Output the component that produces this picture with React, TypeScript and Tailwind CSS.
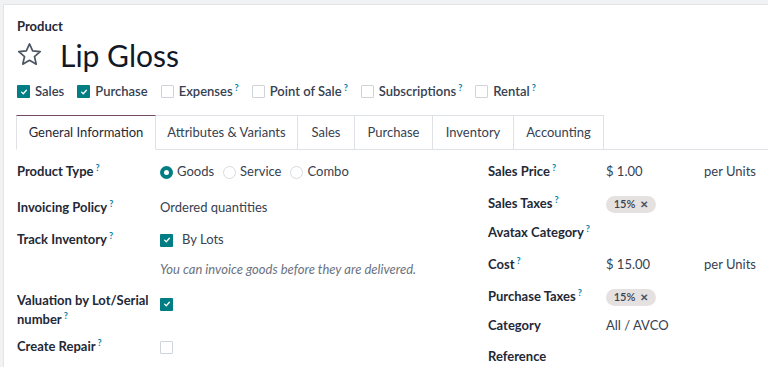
import React from "react";

const teal = "bg-[#017e84]";

function Help() {
  return <span className="inline-block align-top ml-[2px] text-[9px] leading-[12px] font-bold text-[#0180a5]">?</span>;
}

function Check({ on }: { on?: boolean }) {
  if (on) {
    return (
      <span className={`inline-flex items-center justify-center w-[13px] h-[13px] rounded-[1px] ${teal} shrink-0`}>
        <svg viewBox="0 0 10 10" className="w-[8px] h-[8px]">
          <path d="M2 5.2 L4.1 7.2 L8 2.8" fill="none" stroke="white" strokeWidth="1.6" strokeLinecap="round" strokeLinejoin="round" />
        </svg>
      </span>
    );
  }
  return <span className="inline-block w-[13px] h-[13px] rounded-[1px] border border-[#cfd4da] bg-white shrink-0" />;
}

function Radio({ on }: { on?: boolean }) {
  return on ? (
    <span className="inline-block w-[13px] h-[13px] rounded-full border-[4px] border-[#017e84] bg-white shrink-0" />
  ) : (
    <span className="inline-block w-[13px] h-[13px] rounded-full border border-[#d6dadf] bg-white shrink-0" />
  );
}

function Tag() {
  return (
    <span className="inline-flex items-center gap-[5px] h-[17px] w-[50px] justify-center rounded-full bg-[#e6e1e1] text-[11px] font-semibold text-[#374151]">
      15% <span className="text-[10px] leading-none text-[#4b5563]">✕</span>
    </span>
  );
}

const tabs = [
  { name: "General Information", w: 140, active: true },
  { name: "Attributes & Variants", w: 142 },
  { name: "Sales", w: 57 },
  { name: "Purchase", w: 78 },
  { name: "Inventory", w: 81 },
  { name: "Accounting", w: 90 },
];

const apps = [
  { name: "Sales", on: true },
  { name: "Purchase", on: true },
  { name: "Expenses", help: true },
  { name: "Point of Sale", help: true },
  { name: "Subscriptions", help: true },
  { name: "Rental", help: true },
];

export default function App() {
  return (
    <div className="h-[367px] overflow-hidden bg-[#f1f2f4] pl-[3px] pt-[4px] text-[13px] text-[#374151]" style={{ fontFamily: "Lato, 'Open Sans', sans-serif" }}>
      <div className="h-[400px] bg-white border-l border-t border-[#e2e4e8] pl-[13px]">
        {/* header */}
        <div className="pt-[11px] h-[31px] leading-[20px] font-bold text-[#1f2937]">Product</div>
        <div className="flex items-center h-[37px]">
          <svg viewBox="0 0 24 24" className="w-[27px] h-[27px] -ml-[1px]" fill="none" stroke="#4b5563" strokeWidth="1.5" strokeLinejoin="round">
            <path d="M12 2.6 L14.8 8.8 L21.5 9.4 L16.4 13.8 L18 20.6 L12 17.1 L6 20.6 L7.6 13.8 L2.5 9.4 L9.2 8.8 Z" />
          </svg>
          <span className="ml-[17px] text-[30px] leading-none text-[#111827]">Lip Gloss</span>
        </div>
        <div className="flex items-center h-[23px] mt-[7px] gap-[13px]">
          {apps.map((a) => (
            <div key={a.name} className="flex items-center gap-[5px] font-semibold text-[#374151]">
              <Check on={a.on} />
              <span>{a.name}{a.help && <Help />}</span>
            </div>
          ))}
        </div>

        {/* tabs */}
        <div className="mt-[12px] flex h-[35px] border-b border-[#dee2e6] -ml-[1px]">
          {tabs.map((t) => (
            <div
              key={t.name}
              style={{ width: t.w }}
              className={
                t.active
                  ? "h-[35px] flex items-center justify-center border border-[#dee2e6] border-t-[#714b67] border-b-white bg-white text-[#1f2937]"
                  : "h-[34px] flex items-center justify-center border-t border-r border-[#dee2e6] text-[#374151]"
              }
            >
              {t.name}
            </div>
          ))}
        </div>

        {/* form */}
        <div className="flex">
          <div className="w-[471px] pt-[4px]">
            <div className="flex items-center h-[36px]">
              <div className="w-[143px] font-bold text-[#1f2937]">Product Type<Help /></div>
              <div className="flex items-center gap-[4px]">
                <Radio on /><span className="mr-[5px]">Goods</span>
                <Radio /><span className="mr-[5px]">Service</span>
                <Radio /><span>Combo</span>
              </div>
            </div>
            <div className="flex items-center h-[36px]">
              <div className="w-[143px] font-bold text-[#1f2937]">Invoicing Policy<Help /></div>
              <div>Ordered quantities</div>
            </div>
            <div className="flex items-center h-[28px]">
              <div className="w-[143px] font-bold text-[#1f2937]">Track Inventory<Help /></div>
              <div className="flex items-center gap-[9px]"><Check on /><span>By Lots</span></div>
            </div>
            <div className="flex items-center h-[32px]">
              <div className="w-[143px]" />
              <div className="italic text-[#6b7280] text-[13px]">You can invoice goods before they are delivered.</div>
            </div>
            <div className="flex items-start h-[48px] pt-[5px]">
              <div className="w-[143px] font-bold text-[#1f2937] leading-[19px]">
                <div>Valuation by Lot/Serial</div>
                <div>number<Help /></div>
              </div>
              <div className="pt-[3px]"><Check on /></div>
            </div>
            <div className="flex items-center h-[26px]">
              <div className="w-[143px] font-bold text-[#1f2937]">Create Repair<Help /></div>
              <Check />
            </div>
          </div>

          <div className="flex-1 pt-[6px]">
            <div className="flex items-center h-[32px]">
              <div className="w-[118px] font-bold text-[#1f2937]">Sales Price<Help /></div>
              <div className="w-[98px]">$ 1.00</div>
              <div>per Units</div>
            </div>
            <div className="flex items-center h-[32px]">
              <div className="w-[118px] font-bold text-[#1f2937]">Sales Taxes<Help /></div>
              <Tag />
            </div>
            <div className="flex items-center h-[26px]">
              <div className="font-bold text-[#1f2937]">Avatax Category<Help /></div>
            </div>
            <div className="flex items-center h-[38px]">
              <div className="w-[118px] font-bold text-[#1f2937]">Cost<Help /></div>
              <div className="w-[98px]">$ 15.00</div>
              <div>per Units</div>
            </div>
            <div className="flex items-center h-[26px]">
              <div className="w-[118px] font-bold text-[#1f2937]">Purchase Taxes<Help /></div>
              <Tag />
            </div>
            <div className="flex items-center h-[32px]">
              <div className="w-[118px] font-bold text-[#1f2937]">Category</div>
              <div>All / AVCO</div>
            </div>
            <div className="flex items-center h-[30px]">
              <div className="font-bold text-[#1f2937]">Reference</div>
            </div>
          </div>
        </div>
      </div>
    </div>
  );
}
